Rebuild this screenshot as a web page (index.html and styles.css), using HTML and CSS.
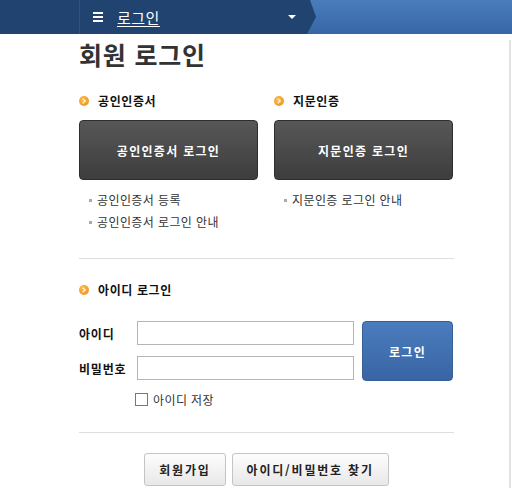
FILE: index.html
```html
<!DOCTYPE html>
<html lang="ko">
<head>
<meta charset="utf-8">
<title>회원 로그인</title>
<link rel="stylesheet" href="styles.css">
</head>
<body>
<header class="topbar">
  <div class="home"></div>
  <div class="crumb">
    <span class="burger"><i></i><i></i><i></i></span>
    <a class="crumb-link" href="#">로그인</a>
    <span class="caret"></span>
  </div>
  <div class="rest"></div>
</header>
<div class="wrap">
  <main class="content">
    <h1 class="title">회원 로그인</h1>
    <div class="cols">
      <section class="col">
        <h2 class="sec-head"><span class="dot"></span>공인인증서</h2>
        <button class="dark-btn" type="button">공인인증서 로그인</button>
        <ul class="links">
          <li>공인인증서 등록</li>
          <li>공인인증서 로그인 안내</li>
        </ul>
      </section>
      <section class="col">
        <h2 class="sec-head"><span class="dot"></span>지문인증</h2>
        <button class="dark-btn" type="button">지문인증 로그인</button>
        <ul class="links">
          <li>지문인증 로그인 안내</li>
        </ul>
      </section>
    </div>
    <hr class="divider">
    <h2 class="sec-head id-head"><span class="dot"></span>아이디 로그인</h2>
    <form class="login-form">
      <label class="lbl lbl-id" for="uid">아이디</label>
      <input class="field field-id" id="uid" type="text">
      <label class="lbl lbl-pw" for="upw">비밀번호</label>
      <input class="field field-pw" id="upw" type="password">
      <button class="blue-btn" type="button">로그인</button>
      <label class="save"><span class="box"></span>아이디 저장</label>
    </form>
    <hr class="divider divider2">
    <div class="bottom">
      <button class="light-btn" type="button">회원가입</button>
      <button class="light-btn" type="button">아이디/비밀번호 찾기</button>
    </div>
  </main>
</div>
</body>
</html>
```
FILE: styles.css
```css
* { box-sizing: border-box; }
html, body { margin: 0; padding: 0; background: #fff; }
body {
  font-family: "Noto Sans CJK KR", "Noto Sans", sans-serif;
  color: #333;
  font-size: 12px;
  width: 512px;
  height: 498px;
  overflow: hidden;
}
.topbar {
  display: flex;
  height: 34px;
  background: linear-gradient(#4a7cbb, #3766a5);
}
.home {
  width: 80px;
  background: #21436f;
  border-right: 1px solid #2f5384;
}
.crumb {
  width: 236px;
  background: #21436f;
  display: flex;
  align-items: center;
  padding-left: 13px;
  clip-path: polygon(0 0, 230px 0, 236px 50%, 227px 100%, 0 100%);
}
.burger {
  display: flex;
  flex-direction: column;
  gap: 2px;
  width: 10px;
  margin-right: 14px;
}
.burger i { display: block; height: 2px; background: #fff; }
.crumb-link {
  color: #fff;
  font-size: 15px;
  text-decoration: underline;
  text-underline-offset: 2px;
  letter-spacing: 0.5px;
}
.caret {
  margin-left: auto;
  margin-right: 20px;
  width: 0; height: 0;
  border-left: 4px solid transparent;
  border-right: 4px solid transparent;
  border-top: 4px solid #fff;
}
.rest { flex: 1; }
.wrap {
  margin-top: 6px;
  width: 511px;
  height: 448px;
  border-right: 2px solid #e2e2e2;
}
.content {
  padding-left: 79px;
  width: 454px;
}
.title {
  margin: 0;
  font-size: 25px;
  line-height: 28px;
  font-weight: bold;
  color: #333;
  letter-spacing: 0.8px;
}
.cols {
  display: flex;
  gap: 16px;
  margin-top: 24px;
}
.col { width: 179px; }
.sec-head {
  margin: 0;
  display: flex;
  align-items: center;
  font-size: 12px;
  line-height: 18px;
  font-weight: bold;
  color: #111;
  letter-spacing: 0.6px;
}
.dot {
  width: 10px; height: 10px;
  border-radius: 50%;
  background: radial-gradient(circle at 40% 35%, #fbbd50, #ee8a12);
  margin-right: 9px;
  position: relative;
}
.dot::after {
  content: "";
  position: absolute;
  left: 2px; top: 3px;
  width: 3px; height: 3px;
  border-right: 1.3px solid #fff;
  border-top: 1.3px solid #fff;
  transform: rotate(45deg);
}
.dark-btn {
  display: block;
  margin-top: 10px;
  width: 179px;
  height: 60px;
  border: 1px solid #2e2e2e;
  border-radius: 4px;
  background: linear-gradient(#575757, #3d3d3d);
  color: #fff;
  font-family: inherit;
  font-size: 12px;
  font-weight: bold;
  letter-spacing: 1.3px;
}
.links {
  list-style: none;
  margin: 9px 0 0;
  padding: 0 0 0 10px;
}
.links li {
  line-height: 22px;
  font-size: 12px;
  color: #333;
  letter-spacing: 0.4px;
  display: flex;
  align-items: center;
}
.links li::before {
  content: "";
  width: 3px; height: 3px;
  background: #aaa;
  margin-right: 5px;
}
.divider {
  margin: 25px 0 0;
  width: 375px;
  border: 0;
  border-top: 1px solid #dedede;
}
.id-head { margin-top: 22px; }
.login-form {
  display: grid;
  grid-template-columns: 50px 217px 91px;
  grid-template-rows: 24px 24px 16px;
  column-gap: 8px;
  row-gap: 11px;
  margin-top: 22px;
}
.lbl {
  font-weight: bold;
  font-size: 12px;
  color: #111;
  letter-spacing: 0.8px;
  align-self: center;
  white-space: nowrap;
}
.lbl-id { grid-column: 1; grid-row: 1; }
.lbl-pw { grid-column: 1; grid-row: 2; }
.field {
  height: 24px;
  border: 1px solid #b5b5b5;
  margin: 0;
  padding: 0 4px;
  font-family: inherit;
}
.field-id { grid-column: 2; grid-row: 1; }
.field-pw { grid-column: 2; grid-row: 2; }
.blue-btn {
  grid-column: 3;
  grid-row: 1 / span 2;
  height: 60px;
  border: 1px solid #345f98;
  border-radius: 4px;
  background: linear-gradient(#4b7cbd, #3865a4);
  color: #fff;
  font-family: inherit;
  font-size: 12px;
  font-weight: bold;
  letter-spacing: 1.3px;
}
.save {
  grid-column: 2;
  grid-row: 3;
  margin-left: -2px;
  display: flex;
  align-items: center;
  font-size: 12px;
  color: #333;
  letter-spacing: 0.4px;
}
.box {
  width: 13px; height: 13px;
  border: 1px solid #777;
  background: #fff;
  margin-right: 5px;
}
.divider2 { margin-top: 25px; }
.bottom {
  display: flex;
  justify-content: center;
  gap: 6px;
  width: 375px;
  margin-top: 20px;
}
.light-btn {
  height: 33px;
  padding: 0 14px;
  border: 1px solid #c4c4c4;
  border-radius: 3px;
  background: linear-gradient(#fdfdfd, #e8e8e8);
  color: #222;
  font-family: inherit;
  font-size: 12px;
  font-weight: bold;
  letter-spacing: 1.8px;
}
```
